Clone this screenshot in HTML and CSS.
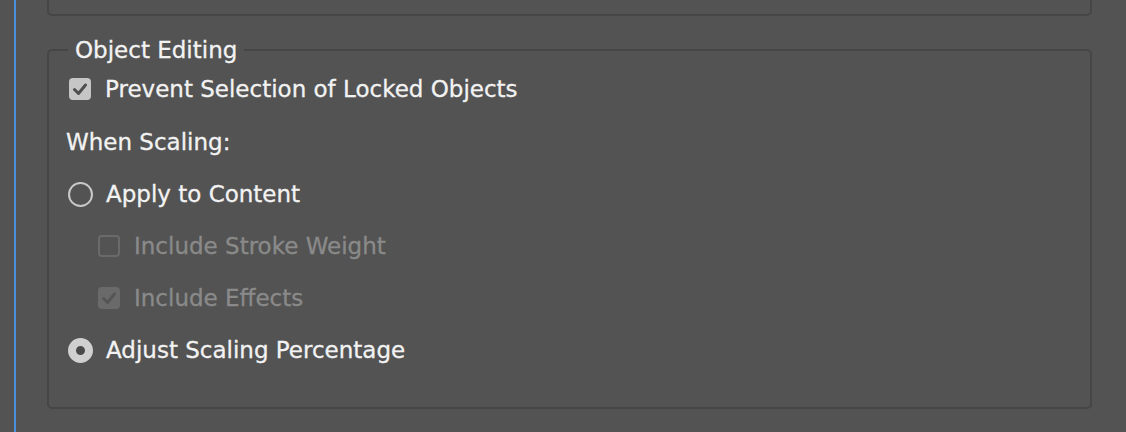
FILE: index.html
```html
<!DOCTYPE html>
<html>
<head>
<meta charset="utf-8">
<link rel="stylesheet" href="styles.css">
</head>
<body>
<div class="page">
  <div class="focus-line"></div>
  <div class="panel">
    <div class="prev-box"></div>
    <fieldset class="group">
      <legend class="group-title">Object Editing</legend>
      <div class="row">
        <span class="check checked">
          <svg viewBox="0 0 22 22" width="22" height="22"><path d="M5.5 11.5 L9.5 15.5 L16.5 7" fill="none" stroke="#4e4e4e" stroke-width="3" stroke-linecap="round" stroke-linejoin="round"/></svg>
        </span>
        <span class="label">Prevent Selection of Locked Objects</span>
      </div>
      <div class="row row-heading">
        <span class="label">When Scaling:</span>
      </div>
      <div class="row">
        <span class="radio"></span>
        <span class="label label-radio">Apply to Content</span>
      </div>
      <div class="row row-indent">
        <span class="check disabled"></span>
        <span class="label label-disabled">Include Stroke Weight</span>
      </div>
      <div class="row row-indent">
        <span class="check disabled checked-disabled">
          <svg viewBox="0 0 22 22" width="22" height="22"><path d="M5.5 11.5 L9.5 15.5 L16.5 7" fill="none" stroke="#555555" stroke-width="3" stroke-linecap="round" stroke-linejoin="round"/></svg>
        </span>
        <span class="label label-disabled">Include Effects</span>
      </div>
      <div class="row">
        <span class="radio radio-on"></span>
        <span class="label label-radio">Adjust Scaling Percentage</span>
      </div>
    </fieldset>
  </div>
</div>
</body>
</html>
```
FILE: styles.css
```css
html, body {
  margin: 0;
  padding: 0;
}
body {
  width: 1126px;
  height: 432px;
  overflow: hidden;
  background: #535353;
  font-family: "DejaVu Sans", "Liberation Sans", sans-serif;
  color: #f2f2f2;
}
.page {
  display: flex;
  height: 432px;
  padding-left: 14px;
}
.focus-line {
  width: 2px;
  height: 100%;
  background: #4a90dc;
  flex: none;
}
.panel {
  margin-left: 31px;
  width: 1045px;
  flex: none;
}
.prev-box {
  height: 40px;
  margin-top: -24px;
  box-sizing: border-box;
  border: 2px solid #464646;
  border-radius: 5px;
}
.group {
  margin: 21px 0 0 0;
  border: 2px solid #464646;
  border-radius: 5px;
  padding: 0 17px 31px 17px;
  min-width: 0;
}
.group-title {
  margin-left: 2px;
  padding: 0 7px;
  font-size: 23px;
  line-height: 26px;
  -webkit-text-stroke: 0.3px currentColor;
}
.row {
  display: flex;
  align-items: center;
  height: 52px;
  font-size: 23px;
}
.label {
  -webkit-text-stroke: 0.3px currentColor;
}
.row-heading {
  height: 53px;
}
.row-indent {
  padding-left: 29px;
}
.check {
  width: 22px;
  height: 22px;
  box-sizing: border-box;
  border-radius: 4px;
  margin-left: 3px;
  margin-right: 14px;
  flex: none;
  display: flex;
}
.check.checked {
  background: #c6c6c6;
}
.check.disabled {
  border: 2px solid #6a6a6a;
}
.check.checked-disabled {
  border: none;
  background: #6a6a6a;
}
.radio {
  width: 25px;
  height: 25px;
  box-sizing: border-box;
  border: 2px solid #c8c8c8;
  border-radius: 50%;
  margin-left: 2px;
  margin-right: 13px;
  flex: none;
}
.radio-on {
  border: 8px solid #d0d0d0;
  background: #4a4a4a;
}
.label-disabled {
  color: #8a8a8a;
}
```
